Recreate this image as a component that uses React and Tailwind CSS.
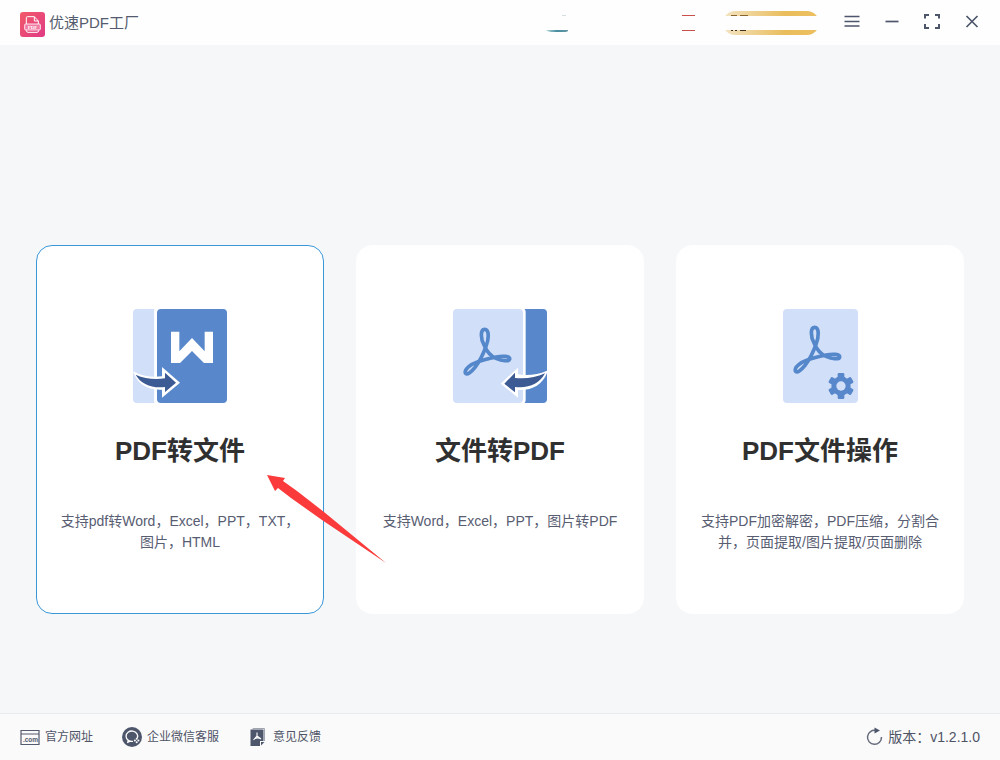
import React from "react";

function AppLogo() {
  return (
    <svg viewBox="0 0 75 75" className="h-[25px] w-[25px] shrink-0" aria-hidden="true">
      <defs>
        <linearGradient id="logo" x1="0" y1="0" x2="1" y2="1">
          <stop offset="0" stopColor="#f25a68" />
          <stop offset="1" stopColor="#e03a86" />
        </linearGradient>
      </defs>
      <rect width="75" height="75" rx="9" fill="url(#logo)" />
      <path d="M19 36V17q0-3 3-3h21l12 13v9M43 14v13h12" fill="none" stroke="#fff" strokeWidth="3" />
      <rect x="14" y="36" width="47" height="18" rx="3" fill="#f27ba3" stroke="#fff" strokeWidth="2.5" />
      <path d="M19 55q0 6 5 6h27q5 0 5-6" fill="none" stroke="#fff" strokeWidth="3" />
      <text x="37.5" y="50.5" textAnchor="middle" fontSize="15" fontWeight="bold" fontFamily="Liberation Serif, serif" fill="#fff">
        PDF
      </text>
    </svg>
  );
}

function PdfMark() {
  return (
    <path
      d="M133 152C121 132 121 103 134 103C148 103 147 132 138 154C131 174 121 196 105 217C94 231 80 242 76 234C73 222 92 208 112 201C130 194 148 190 168 186C188 182 210 183 209 192C207 201 185 197 168 190C152 183 140 168 133 152Z"
      fill="none"
      stroke="#5587cb"
      strokeWidth="11"
      strokeLinejoin="round"
    />
  );
}

function PdfToFileIcon() {
  return (
    <svg viewBox="39 42 282 282" className="h-[94px] w-[94px]" aria-hidden="true">
      <path d="M51 42H103V324H51Q39 324 39 312V54Q39 42 51 42Z" fill="#d2dff9" />
      <rect x="103" y="34" width="226" height="298" rx="18" fill="#fff" />
      <rect x="111" y="42" width="210" height="282" rx="12" fill="#5888cb" />
      <path d="M153 110H178V169L216 129L254 169V110H279V204H252L216 168L180 204H153Z" fill="#fff" />
      <path d="M39 229C66 244 98 248 126 244V216L180 263L126 308V284C83 286 51 268 39 229Z" fill="#fff" />
      <path d="M47 239C75 252 106 254 135 250V233L168 263L135 291V276C96 281 62 267 47 239Z" fill="#3c5a93" />
    </svg>
  );
}

function FileToPdfIcon() {
  return (
    <svg viewBox="39 42 282 282" className="h-[94px] w-[94px]" aria-hidden="true">
      <rect x="220" y="42" width="101" height="282" rx="12" fill="#5888cb" />
      <rect x="31" y="34" width="226" height="298" rx="18" fill="#fff" />
      <rect x="39" y="42" width="210" height="282" rx="12" fill="#d2dff9" />
      <PdfMark />
      <path d="M321 227C294 239 263 242 234 238V218L182 266L234 308V285C277 287 307 269 321 234Z" fill="#fff" />
      <path d="M315 235C286 249 256 252 225 249V233L193 266L225 292V276C264 281 299 267 315 235Z" fill="#3c5a93" />
    </svg>
  );
}

function PdfToolsIcon() {
  return (
    <svg viewBox="39 42 225 282" className="h-[94px] w-[75px]" aria-hidden="true">
      <rect x="39" y="42" width="225" height="282" rx="12" fill="#d2dff9" />
      <g transform="translate(0 -6)">
        <PdfMark />
      </g>
      <g transform="translate(213 273)" fill="#5888cb">
        {[0, 60, 120].map((angle) => (
          <rect key={angle} x="-10" y="-39" width="20" height="78" rx="4" transform={`rotate(${angle})`} />
        ))}
        <circle r="29" />
        <circle r="14" fill="#d2dff9" />
      </g>
    </svg>
  );
}

function PointerArrow() {
  return (
    <svg
      viewBox="0 0 120 90"
      className="pointer-events-none absolute left-[230px] top-[229px] z-10 h-[90px] w-[120px]"
      aria-hidden="true"
    >
      <path d="M0 0L18 3L16 6L30 16L57 37L119 88L55 45L24 23L11 13L8 16Z" fill="#fb3b3b" />
    </svg>
  );
}

const cards = [
  {
    title: "PDF转文件",
    text: "支持pdf转Word，Excel，PPT，TXT，图片，HTML",
    Icon: PdfToFileIcon,
    active: true,
  },
  { title: "文件转PDF", text: "支持Word，Excel，PPT，图片转PDF", Icon: FileToPdfIcon },
  {
    title: "PDF文件操作",
    text: "支持PDF加密解密，PDF压缩，分割合并，页面提取/图片提取/页面删除",
    Icon: PdfToolsIcon,
  },
];

function Card({ title, text, Icon, active }) {
  return (
    <button
      type="button"
      className={
        "relative flex flex-col items-center justify-start rounded-2xl border bg-white px-[22px] pt-[63px] pb-[60px] " +
        (active ? "border-[#3b97d8]" : "border-white")
      }
    >
      <Icon />
      <span className="mt-7 text-[26px] leading-10 font-bold text-[#303030]">{title}</span>
      <span className="mt-10 text-sm leading-[21px] text-[#585d72]">{text}</span>
      {active && <PointerArrow />}
    </button>
  );
}

function WindowButton({ label, children }) {
  return (
    <button type="button" aria-label={label} className="flex h-10 w-10 items-center justify-center">
      <svg viewBox="0 0 18 18" className="h-[18px] w-[18px]" fill="none" stroke="#4e566b" strokeWidth="1.7">
        {children}
      </svg>
    </button>
  );
}

function Header() {
  return (
    <header className="flex h-[45px] items-start bg-[#fefefe] pr-2 pl-5">
      <div className="flex items-start gap-1 pt-3">
        <AppLogo />
        <h1 className="text-[15px] leading-[22px] text-[#555b6e]">优速PDF工厂</h1>
      </div>
      <div className="ml-auto flex pt-[11px]">
        <button type="button" aria-label="账户" className="mr-[114px]">
          <svg viewBox="0 0 22 24" className="h-6 w-[22px]" aria-hidden="true">
            <defs>
              <linearGradient id="teal">
                <stop offset="0" stopColor="#b9d8dd" />
                <stop offset="0.5" stopColor="#478d9f" />
                <stop offset="1" stopColor="#6797a5" />
              </linearGradient>
            </defs>
            <path d="M0 19H22V20Q21 21 19 21H7Q2 21 0 19Z" fill="url(#teal)" />
            <path d="M16 4.5H20" stroke="#d5dfe1" />
          </svg>
        </button>
        <button type="button" aria-label="消息" className="mr-7">
          <svg viewBox="0 0 13 24" className="h-6 w-[13px]" aria-hidden="true">
            <path d="M0 4.5H13M0 19.5H13" stroke="#c85249" strokeWidth="1.2" />
          </svg>
        </button>
        <button type="button" aria-label="会员" className="mr-[13px]">
          <svg viewBox="0 0 96 24" className="h-6 w-24" aria-hidden="true">
            <defs>
              <linearGradient id="gold">
                <stop offset="0" stopColor="#f4e4c3" />
                <stop offset="0.65" stopColor="#e9bd5c" />
                <stop offset="1" stopColor="#edbf60" />
              </linearGradient>
            </defs>
            <rect width="96" height="24" rx="12" fill="url(#gold)" />
            <rect y="5" width="96" height="14" fill="#fefefe" />
            <path d="M8 4.5H14M17 4.5H25" stroke="#87652d" />
            <path d="M8 19.5H10M12 19.5H14M17 19.5H23" stroke="#3e3220" />
          </svg>
        </button>
      </div>
      <div className="flex pt-px">
        <WindowButton label="菜单">
          <path d="M1.5 4.5H16.5M1.5 9.5H16.5M1.5 14H16.5" />
        </WindowButton>
        <WindowButton label="最小化">
          <path d="M2.5 9.5H15.5" />
        </WindowButton>
        <WindowButton label="最大化">
          <path d="M2 6.5V3H6M12 3H16V6.5M16 12V16H12M6 16H2V12" strokeWidth="2" />
        </WindowButton>
        <WindowButton label="关闭">
          <path d="M3.5 4L14.5 15M14.5 4L3.5 15" />
        </WindowButton>
      </div>
    </header>
  );
}

function Footer() {
  return (
    <footer className="flex h-[47px] items-center border-t border-[#e8ebee] bg-[#fafafa] px-5 text-xs text-[#4e5366]">
      <nav className="flex items-center gap-[29px]">
        <a href="#site" className="flex items-center gap-[5px]">
          <svg viewBox="0 0 20 20" className="h-5 w-5" fill="none" stroke="#555b6e" aria-hidden="true">
            <path d="M1 3.5H19V17.5H1ZM1 7H19" strokeWidth="1.2" />
            <text x="10.5" y="15.2" textAnchor="middle" fontSize="6.5" fontWeight="bold" fontFamily="Liberation Sans, sans-serif" fill="#555b6e" stroke="none">
              .com
            </text>
          </svg>
          官方网址
        </a>
        <a href="#service" className="flex items-center gap-[5px]">
          <svg viewBox="0 0 20 20" className="h-5 w-5" fill="none" aria-hidden="true">
            <circle cx="10" cy="10" r="10" fill="#4e566b" />
            <path d="M15.3 11A5.8 5.2 0 1 0 11 14.3M6.2 12.5L5.8 15.2L8.5 14.2" stroke="#fff" strokeWidth="1.3" />
            <g fill="#fff">
              <circle cx="14.7" cy="11.7" r="1" />
              <circle cx="16.4" cy="13.5" r="1" />
              <circle cx="14.7" cy="15.2" r="1" />
              <circle cx="12.9" cy="13.5" r="1" />
            </g>
          </svg>
          企业微信客服
        </a>
        <a href="#feedback" className="flex items-center gap-[5px]">
          <svg viewBox="0 0 20 20" className="h-5 w-5" aria-hidden="true">
            <path d="M5 2.5V1.5H16.5V14" fill="none" stroke="#a0a5b1" />
            <path d="M2.5 2.5H15.5V14H12V19H2.5Z" fill="#4e566b" />
            <path d="M13 15H16.5L13 18.5Z" fill="#4e566b" />
            <path d="M9 5.5V9L5.5 13M9 9L13 12M7 11.5Q10 10 13 12" fill="none" stroke="#fff" strokeWidth="1.1" />
          </svg>
          意见反馈
        </a>
      </nav>
      <button type="button" className="ml-auto flex items-center gap-1 text-sm">
        <svg viewBox="0 0 20 20" className="h-5 w-5" aria-hidden="true">
          <path d="M12 3.5A7 7 0 1 0 17.5 10" fill="none" stroke="#666b7c" strokeWidth="1.5" />
          <path d="M10.5 0.5L16 3.5L10.5 6.5Z" fill="#4e566b" />
        </svg>
        版本：v1.2.1.0
      </button>
    </footer>
  );
}

export default function App() {
  return (
    <div className="flex min-h-screen flex-col bg-[#f5f7f9] font-['Liberation_Sans','Noto_Sans_CJK_SC',sans-serif]">
      <Header />
      <main className="flex-1 px-9 pt-[200px] pb-24">
        <div className="grid grid-cols-3 gap-8">
          {cards.map((card) => (
            <Card key={card.title} {...card} />
          ))}
        </div>
      </main>
      <Footer />
    </div>
  );
}
